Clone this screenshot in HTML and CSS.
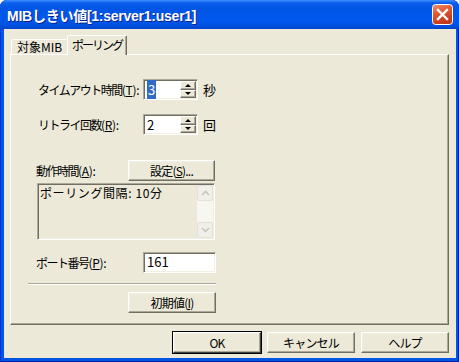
FILE: index.html
```html
<!DOCTYPE html>
<html lang="ja">
<head>
    <meta charset="UTF-8">
    <title>MIBしきい値</title>
    <link rel="stylesheet" href="styles.css">
</head>
<body>
    <div class="window">
        <div class="titlebar">
            <span class="title">MIBしきい値[1:server1:user1]</span>
            <span class="close">
                <svg width="21" height="21" viewBox="0 0 21 21">
                    <defs>
                        <linearGradient id="cg" x1="0" y1="0" x2="0.4" y2="1">
                            <stop offset="0" stop-color="#f09070"/>
                            <stop offset="0.5" stop-color="#e0552e"/>
                            <stop offset="1" stop-color="#c2381a"/>
                        </linearGradient>
                    </defs>
                    <rect x="0.5" y="0.5" width="20" height="20" rx="3" fill="url(#cg)" stroke="#ffffff"/>
                    <path d="M6 6 L15 15 M15 6 L6 15" stroke="#ffffff" stroke-width="2.4" stroke-linecap="square"/>
                </svg>
            </span>
        </div>
        <div class="client">
            <div class="tabs">
                <div class="tab">対象MIB</div>
                <div class="tab active">ポーリング</div>
            </div>
            <div class="panel">
                <div class="col">
                    <div class="row">
                        <span class="lbl lbl-wide">タイムアウト時間<span class="key">(<u>T</u>):</span></span>
                        <div class="spin">
                            <span class="val"><span class="sel">3</span></span>
                            <span class="arrows">
                                <span class="arr up"></span>
                                <span class="arr down"></span>
                            </span>
                        </div>
                        <span class="unit">秒</span>
                    </div>
                    <div class="row">
                        <span class="lbl lbl-wide">リトライ回数<span class="key">(<u>R</u>):</span></span>
                        <div class="spin">
                            <span class="val">2</span>
                            <span class="arrows">
                                <span class="arr up"></span>
                                <span class="arr down"></span>
                            </span>
                        </div>
                        <span class="unit">回</span>
                    </div>
                    <div class="row row-action">
                        <span class="lbl lbl-btn">動作時間<span class="key">(<u>A</u>):</span></span>
                        <button class="btn">設定(<u>S</u>)...</button>
                    </div>
                    <div class="listbox">
                        <div class="list-text">ポーリング間隔: 10分</div>
                        <div class="scrollbar">
                            <span class="sb-btn"><svg width="9" height="6" viewBox="0 0 9 6"><path d="M1 5 L4.5 1.5 L8 5" fill="none" stroke="#c8c6bc" stroke-width="1.6"/></svg></span>
                            <span class="sb-track"></span>
                            <span class="sb-btn"><svg width="9" height="6" viewBox="0 0 9 6"><path d="M1 1 L4.5 4.5 L8 1" fill="none" stroke="#c8c6bc" stroke-width="1.6"/></svg></span>
                        </div>
                    </div>
                    <div class="row row-port">
                        <span class="lbl lbl-port">ポート番号<span class="key">(<u>P</u>):</span></span>
                        <div class="field">161</div>
                    </div>
                    <div class="separator"></div>
                    <button class="btn btn-reset">初期値(<u>I</u>)</button>
                </div>
            </div>
            <div class="buttons">
                <button class="btn btn-default">OK</button>
                <button class="btn">キャンセル</button>
                <button class="btn">ヘルプ</button>
            </div>
        </div>
    </div>
</body>
</html>
```

FILE: styles.css
```css
body {
    margin: 0;
    font-family: "Noto Sans CJK JP", "Liberation Sans", sans-serif;
    font-size: 12px;
    color: #000;
    background: #fff;
}

.window {
    width: 459px;
    height: 362px;
    display: flex;
    flex-direction: column;
    background: #0055e5;
    border-radius: 7px 7px 0 0;
    overflow: hidden;
    box-shadow: inset 1px 0 #0831d9, inset -1px 0 #001ea0, inset 0 -1px #001ea0;
}

.titlebar {
    height: 29px;
    display: flex;
    align-items: center;
    justify-content: space-between;
    padding: 0 6px 0 7px;
    background: linear-gradient(#3d8ffd 0px, #0a5eec 3px, #0055e5 9px, #0058ee 20px, #0050e0 26px, #0042c8 29px);
}

.title {
    color: #fff;
    font-family: "Liberation Sans", "Noto Sans CJK JP", sans-serif;
    font-weight: bold;
    font-size: 14px;
    letter-spacing: -0.25px;
    text-shadow: 1px 1px #0a1e8c;
}

.close {
    display: flex;
    width: 21px;
    height: 21px;
}

.client {
    flex: 1;
    margin: 0 3px 4px 4px;
    background: #ece9d8;
    padding: 6px 7px 0 6px;
}

.tabs {
    display: flex;
    align-items: flex-end;
    height: 19px;
    padding-left: 1px;
}

.tab {
    height: 15px;
    width: 56px;
    box-sizing: border-box;
    text-align: center;
    line-height: 14px;
    white-space: nowrap;
    border-top: 1px solid #fff;
    border-left: 1px solid #fff;
    border-radius: 2px 2px 0 0;
}

.tab.active {
    height: 20px;
    width: 60px;
    margin-bottom: -1px;
    background: #ece9d8;
    border-right: 1px solid #716f64;
    box-shadow: inset -1px 0 #aca899;
    line-height: 18px;
    letter-spacing: -2px;
    position: relative;
    z-index: 1;
}

.panel {
    height: 271px;
    box-sizing: border-box;
    border-top: 1px solid #fff;
    border-left: 1px solid #fff;
    border-right: 1px solid #716f64;
    border-bottom: 1px solid #716f64;
    box-shadow: inset -1px -1px #aca899;
    padding: 24px 0 0 17px;
}

.col {
    width: 188px;
}

.row {
    display: flex;
    align-items: center;
    height: 21px;
    margin-bottom: 14px;
}

.lbl {
    box-sizing: border-box;
    white-space: nowrap;
    letter-spacing: -1.5px;
}

.key {
    letter-spacing: -0.3px;
}

.lbl-wide {
    width: 117px;
    padding-left: 10px;
}

.lbl-btn {
    width: 100px;
    padding-left: 8px;
}

.lbl-port {
    width: 115px;
    padding-left: 8px;
}

u {
    text-decoration: underline;
    text-underline-offset: 1px;
}

.spin {
    width: 56px;
    height: 21px;
    box-sizing: border-box;
    background: #fff;
    border: 1px solid;
    border-color: #aca899 #fff #fff #aca899;
    box-shadow: inset 1px 1px #716f64, inset -1px -1px #f1efe2;
    display: flex;
    padding: 1px 1px 1px 2px;
}

.val {
    flex: 1;
    padding-left: 1px;
    line-height: 17px;
    font-size: 13px;
}

.sel {
    background: #316ac5;
    color: #fff;
    padding: 0 1px;
}

.arrows {
    width: 16px;
    display: flex;
    flex-direction: column;
}

.arr {
    flex: 1;
    box-sizing: border-box;
    background: #ece9d8;
    border: 1px solid;
    border-color: #fff #716f64 #716f64 #fff;
    box-shadow: inset -1px -1px #aca899;
    display: flex;
    align-items: center;
    justify-content: center;
}

.arr::after {
    content: "";
    border-left: 3px solid transparent;
    border-right: 3px solid transparent;
}

.up::after {
    border-bottom: 3px solid #000;
}

.down::after {
    border-top: 3px solid #000;
}

.unit {
    margin-left: 5px;
    font-size: 13px;
}

.row-action {
    margin-top: 25px;
    margin-bottom: 2px;
}

.btn {
    width: 88px;
    height: 21px;
    padding: 0;
    font-family: inherit;
    font-size: 12px;
    letter-spacing: -0.8px;
    color: #000;
    background: #ece9d8;
    border: 1px solid;
    border-color: #fff #716f64 #716f64 #fff;
    box-shadow: inset -1px -1px #aca899, inset 1px 1px #f1efe2;
    box-sizing: border-box;
}

.row-action .btn {
    width: 87px;
}

.listbox {
    margin-left: 9px;
    width: 178px;
    height: 57px;
    box-sizing: border-box;
    border: 1px solid;
    border-color: #aca899 #fff #fff #aca899;
    box-shadow: inset 1px 1px #716f64, inset -1px -1px #f1efe2;
    padding: 1px;
    display: flex;
}

.list-text {
    flex: 1;
    padding-left: 1px;
    line-height: 16px;
    letter-spacing: 0.6px;
    white-space: pre;
}

.scrollbar {
    width: 16px;
    display: flex;
    flex-direction: column;
    background: #f7f6f1;
}

.sb-btn {
    height: 16px;
    box-sizing: border-box;
    border: 1px solid #e3e1d6;
    border-radius: 2px;
    background: #f0efe9;
    display: flex;
    align-items: center;
    justify-content: center;
}

.sb-track {
    flex: 1;
}

.row-port {
    margin-top: 12px;
    margin-bottom: 0;
}

.field {
    width: 73px;
    height: 21px;
    box-sizing: border-box;
    background: #fff;
    border: 1px solid;
    border-color: #aca899 #fff #fff #aca899;
    box-shadow: inset 1px 1px #716f64, inset -1px -1px #f1efe2;
    padding: 0 3px;
    line-height: 17px;
    font-size: 13px;
}

.separator {
    margin-top: 10px;
    border-top: 1px solid #aca899;
    border-bottom: 1px solid #fff;
    height: 0;
}

.btn-reset {
    display: block;
    margin: 7px 0 0 100px;
}

.buttons {
    display: flex;
    justify-content: flex-end;
    gap: 6px;
    margin-top: 7px;
}

.btn-default {
    outline: 1px solid #000;
    outline-offset: 0;
    border-color: #fff #404040 #404040 #fff;
}
```
